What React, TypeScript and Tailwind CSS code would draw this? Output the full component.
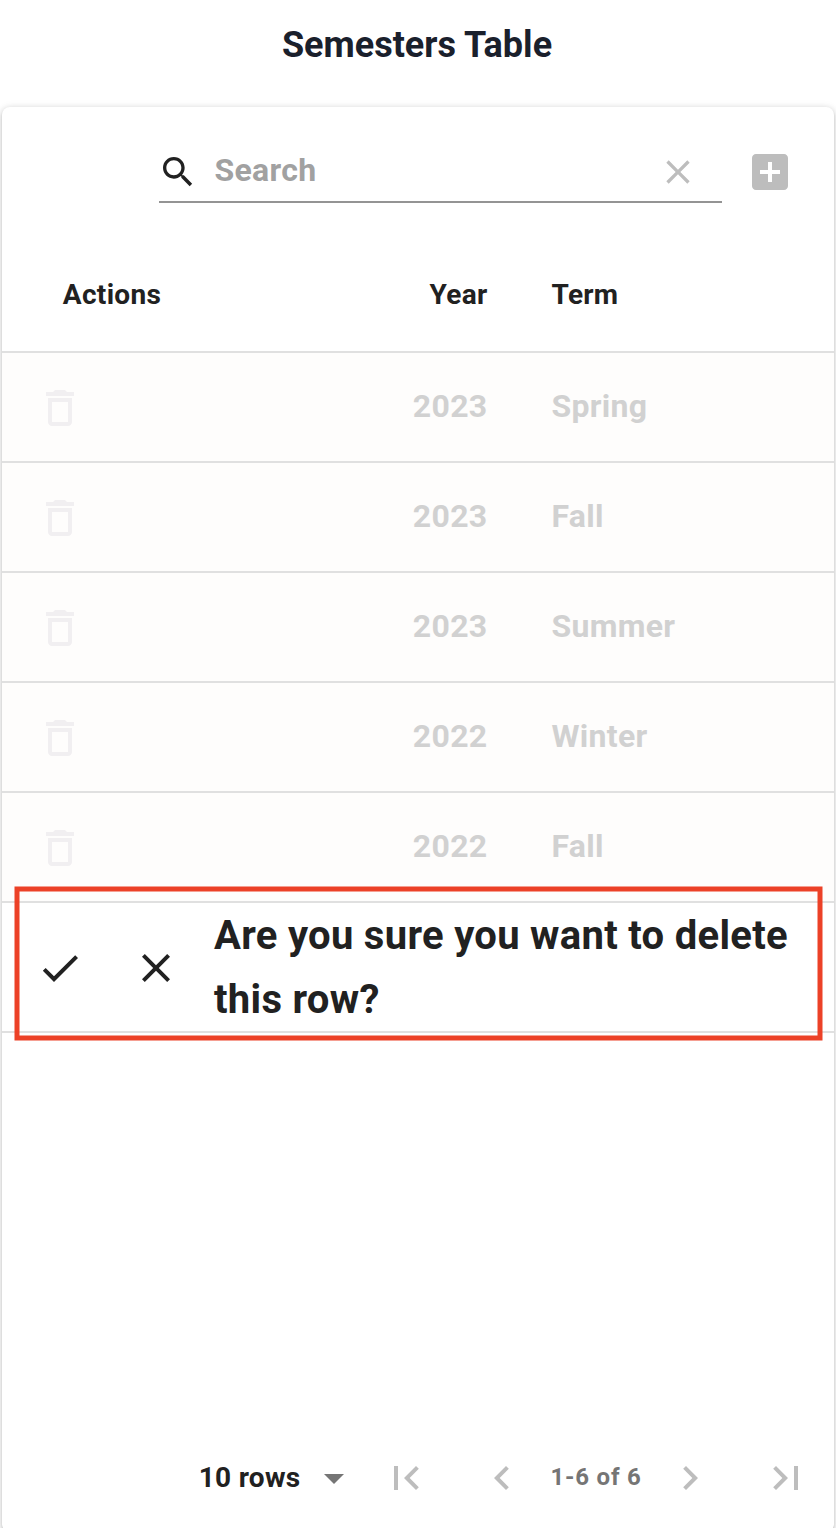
import React from "react";

const PATHS = {
  search:
    "M15.5 14h-.79l-.28-.27C15.41 12.59 16 11.11 16 9.5 16 5.91 13.09 3 9.5 3S3 5.91 3 9.5 5.91 16 9.5 16c1.61 0 3.09-.59 4.23-1.57l.27.28v.79l5 4.99L20.49 19l-4.99-5zm-6 0C7.01 14 5 11.99 5 9.5S7.01 5 9.5 5 14 7.01 14 9.5 11.99 14 9.5 14z",
  clear:
    "M19 6.41L17.59 5 12 10.59 6.41 5 5 6.41 10.59 12 5 17.59 6.41 19 12 13.41 17.59 19 19 17.59 13.41 12z",
  addBox:
    "M19 3H5c-1.11 0-2 .9-2 2v14c0 1.1.89 2 2 2h14c1.1 0 2-.9 2-2V5c0-1.1-.9-2-2-2zm-2 10h-4v4h-2v-4H7v-2h4V7h2v4h4v2z",
  trash:
    "M6 19c0 1.1.9 2 2 2h8c1.1 0 2-.9 2-2V7H6v12zM8 9h8v10H8V9zm7.5-5l-1-1h-5l-1 1H5v2h14V4z",
  check: "M9 16.17L4.83 12l-1.42 1.41L9 19 21 7l-1.41-1.41z",
  dropDown: "M7 10l5 5 5-5z",
  first: "M18.41 16.59L13.82 12l4.59-4.59L17 6l-6 6 6 6zM6 6h2v12H6z",
  previous: "M15.41 7.41L14 6l-6 6 6 6 1.41-1.41L10.83 12z",
  next: "M10 6L8.59 7.41 13.17 12l-4.58 4.59L10 18l6-6z",
  last: "M5.59 7.41L10.18 12l-4.59 4.59L7 18l6-6-6-6zM16 6h2v12h-2z",
};

function Icon({ name, className = "size-12" }: { name: keyof typeof PATHS; className?: string }) {
  return (
    <svg viewBox="0 0 24 24" fill="currentColor" className={`block shrink-0 ${className}`} aria-hidden="true">
      <path d={PATHS[name]} />
    </svg>
  );
}

const SEMESTERS = [
  { year: 2023, term: "Spring" },
  { year: 2023, term: "Fall" },
  { year: 2023, term: "Summer" },
  { year: 2022, term: "Winter" },
  { year: 2022, term: "Fall" },
];

function Toolbar() {
  return (
    <div className="flex h-[130px] items-center pr-10 pl-[156.5px]">
      <div className="flex h-[62px] w-[563px] items-center border-b-2 border-[#949494]">
        <Icon name="search" className="-ml-px size-10 translate-y-px text-[#212121]" />
        <input
          placeholder="Search"
          className="ml-[17px] h-10 min-w-0 flex-1 bg-transparent pb-0.5 text-[32px] font-bold tracking-[0.3px] text-[#212121] outline-none placeholder:text-[#a1a1a1]"
        />
        <button className="mr-6 translate-y-px text-[#bdbdbd]" aria-label="Clear">
          <Icon name="clear" className="size-10" />
        </button>
      </div>
      <button className="ml-[24.5px] text-[#bdbdbd]" aria-label="Add">
        <Icon name="addBox" />
      </button>
    </div>
  );
}

function Pagination() {
  return (
    <div className="flex h-[104px] items-center justify-end text-[#bdbdbd]">
      <button className="flex items-center text-[28px] font-bold tracking-[0.3px] text-[#212121]">
        10 rows
        <Icon name="dropDown" className="ml-[9.5px] size-12 text-[#757575]" />
      </button>
      <button className="p-6"><Icon name="first" /></button>
      <button className="p-6"><Icon name="previous" /></button>
      <span className="w-[92px] pb-0.5 text-center text-[24px] font-bold tracking-[0.8px] whitespace-nowrap text-[#757575]">
        1-6 of 6
      </span>
      <button className="p-6"><Icon name="next" /></button>
      <button className="p-6"><Icon name="last" /></button>
    </div>
  );
}

export default function App() {
  return (
    <div className="flex h-[1528px] w-[836px] flex-col overflow-hidden bg-white font-['Roboto',sans-serif]">
      <h1 className="flex h-[107px] shrink-0 items-start justify-center pt-[21px] pr-0.5 text-[36px] leading-[48px] font-bold text-[#1a202c]">
        Semesters Table
      </h1>
      <main className="relative mx-0.5 flex h-[1425px] shrink-0 flex-col rounded-lg bg-white pb-0.5 shadow-[0_2px_6px_rgba(0,0,0,0.2),0_2px_2px_rgba(0,0,0,0.1),0_0_10px_rgba(0,0,0,0.06)]">
        <Toolbar />
        <div className="flex h-[116px] items-center border-b-2 border-[#e0e0e0] pt-0.5 text-[28px] font-bold tracking-[0.3px] text-[#212121]">
          <div className="w-[220px] text-center">Actions</div>
          <div className="w-[265.5px] text-right">Year</div>
          <div className="pl-16">Term</div>
        </div>
        {SEMESTERS.map((semester, index) => (
          <div
            key={index}
            className="flex h-[110px] shrink-0 items-center border-b-2 border-[#e0e0e0] bg-[#fefdfc] text-[32px] font-bold tracking-[0.3px] text-[#d1d1d1]"
          >
            <button className="ml-[34px] pt-0.5 text-[#f1eff1]" aria-label="Delete">
              <Icon name="trash" />
            </button>
            <div className="w-[403.5px] pb-0.5 text-right">{semester.year}</div>
            <div className="pb-0.5 pl-16">{semester.term}</div>
          </div>
        ))}
        <div className="relative flex h-[130px] shrink-0 items-center border-b-2 border-[#e0e0e0] pt-0.5 text-[#212121]">
          <button className="ml-[34px]" aria-label="Confirm"><Icon name="check" /></button>
          <button className="ml-12" aria-label="Cancel"><Icon name="clear" /></button>
          <p className="ml-[34px] text-[40px] leading-[64px] font-bold tracking-[0.3px]">
            Are you sure you want to delete
            <br />
            this row?
          </p>
          <svg className="pointer-events-none absolute -top-5 left-0" width="832" height="162" aria-hidden="true">
            <rect x="15" y="6" width="803" height="149" fill="none" stroke="#ec4127" strokeWidth="5" />
          </svg>
        </div>
        <div className="flex-1" />
        <Pagination />
      </main>
    </div>
  );
}
